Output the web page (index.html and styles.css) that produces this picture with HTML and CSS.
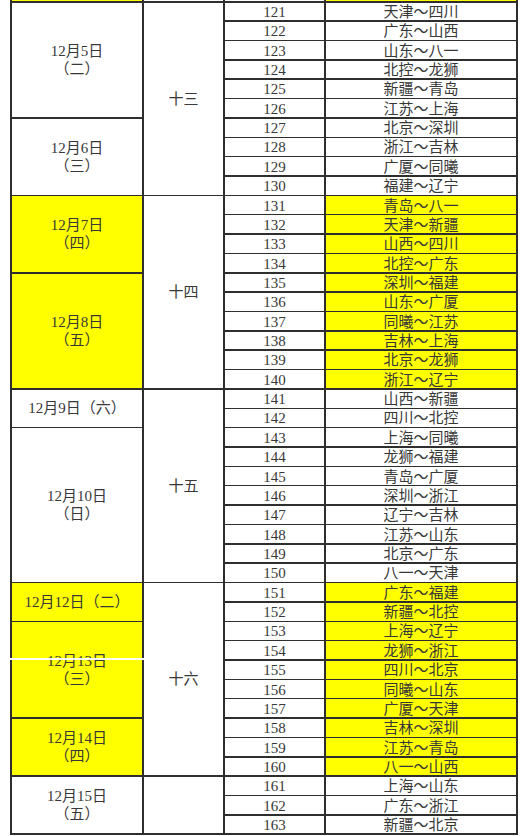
FILE: index.html
```html
<!DOCTYPE html>
<html lang="zh-CN">
<head>
<meta charset="utf-8">
<title>赛程</title>
<link rel="stylesheet" href="styles.css">
</head>
<body>
<div class="sheet">
  <div class="cell c1 y"></div><div class="cell c2"></div><div class="cell c3"></div><div class="cell c4 y"></div>

  <div class="cell c1 s6"><span>12月5日<br>（二）</span></div>
  <div class="cell c2 s10">十三</div>
  <div class="cell c3">121</div><div class="cell c4">天津～四川</div>
  <div class="cell c3">122</div><div class="cell c4">广东～山西</div>
  <div class="cell c3">123</div><div class="cell c4">山东～八一</div>
  <div class="cell c3">124</div><div class="cell c4">北控～龙狮</div>
  <div class="cell c3">125</div><div class="cell c4">新疆～青岛</div>
  <div class="cell c3">126</div><div class="cell c4">江苏～上海</div>
  <div class="cell c1 s4"><span>12月6日<br>（三）</span></div>
  <div class="cell c3">127</div><div class="cell c4">北京～深圳</div>
  <div class="cell c3">128</div><div class="cell c4">浙江～吉林</div>
  <div class="cell c3">129</div><div class="cell c4">广厦～同曦</div>
  <div class="cell c3">130</div><div class="cell c4">福建～辽宁</div>

  <div class="cell c1 s4 y"><span>12月7日<br>（四）</span></div>
  <div class="cell c2 s10">十四</div>
  <div class="cell c3">131</div><div class="cell c4 y">青岛～八一</div>
  <div class="cell c3">132</div><div class="cell c4 y">天津～新疆</div>
  <div class="cell c3">133</div><div class="cell c4 y">山西～四川</div>
  <div class="cell c3">134</div><div class="cell c4 y">北控～广东</div>
  <div class="cell c1 s6 y"><span>12月8日<br>（五）</span></div>
  <div class="cell c3">135</div><div class="cell c4 y">深圳～福建</div>
  <div class="cell c3">136</div><div class="cell c4 y">山东～广厦</div>
  <div class="cell c3">137</div><div class="cell c4 y">同曦～江苏</div>
  <div class="cell c3">138</div><div class="cell c4 y">吉林～上海</div>
  <div class="cell c3">139</div><div class="cell c4 y">北京～龙狮</div>
  <div class="cell c3">140</div><div class="cell c4 y">浙江～辽宁</div>

  <div class="cell c1 s2"><span>12月9日（六）</span></div>
  <div class="cell c2 s10">十五</div>
  <div class="cell c3">141</div><div class="cell c4">山西～新疆</div>
  <div class="cell c3">142</div><div class="cell c4">四川～北控</div>
  <div class="cell c1 s8"><span>12月10日<br>（日）</span></div>
  <div class="cell c3">143</div><div class="cell c4">上海～同曦</div>
  <div class="cell c3">144</div><div class="cell c4">龙狮～福建</div>
  <div class="cell c3">145</div><div class="cell c4">青岛～广厦</div>
  <div class="cell c3">146</div><div class="cell c4">深圳～浙江</div>
  <div class="cell c3">147</div><div class="cell c4">辽宁～吉林</div>
  <div class="cell c3">148</div><div class="cell c4">江苏～山东</div>
  <div class="cell c3">149</div><div class="cell c4">北京～广东</div>
  <div class="cell c3">150</div><div class="cell c4">八一～天津</div>

  <div class="cell c1 s2 y"><span>12月12日（二）</span></div>
  <div class="cell c2 s10">十六</div>
  <div class="cell c3">151</div><div class="cell c4 y">广东～福建</div>
  <div class="cell c3">152</div><div class="cell c4 y">新疆～北控</div>
  <div class="cell c1 s5 y"><span>12月13日<br>（三）</span></div>
  <div class="cell c3">153</div><div class="cell c4 y">上海～辽宁</div>
  <div class="cell c3">154</div><div class="cell c4 y">龙狮～浙江</div>
  <div class="cell c3">155</div><div class="cell c4 y">四川～北京</div>
  <div class="cell c3">156</div><div class="cell c4 y">同曦～山东</div>
  <div class="cell c3">157</div><div class="cell c4 y">广厦～天津</div>
  <div class="cell c1 s3 y"><span>12月14日<br>（四）</span></div>
  <div class="cell c3">158</div><div class="cell c4 y">吉林～深圳</div>
  <div class="cell c3">159</div><div class="cell c4 y">江苏～青岛</div>
  <div class="cell c3">160</div><div class="cell c4 y">八一～山西</div>

  <div class="cell c1 s3"><span>12月15日<br>（五）</span></div>
  <div class="cell c2 s3"></div>
  <div class="cell c3">161</div><div class="cell c4">上海～山东</div>
  <div class="cell c3">162</div><div class="cell c4">广东～浙江</div>
  <div class="cell c3">163</div><div class="cell c4">新疆～北京</div>

  <div class="scanline"></div>
</div>
</body>
</html>
```

FILE: styles.css
```css
html, body {
  margin: 0;
  padding: 0;
  background: #ffffff;
}

body {
  font-family: "Liberation Serif", "Noto Sans CJK SC", serif;
  font-size: 15px;
  color: #383838;
}

.sheet {
  position: relative;
  display: grid;
  grid-template-columns: 130px 79px 99px 190px;
  grid-template-rows: 1px repeat(43, 17.87px);
  gap: 1.5px 2px;
  padding: 0 2px 2px 2px;
  margin-left: 10px;
  width: max-content;
  background: #2e2e2e;
}

.cell {
  display: flex;
  align-items: center;
  justify-content: center;
  text-align: center;
  background: #ffffff;
  line-height: 18px;
  overflow: hidden;
  white-space: nowrap;
}

.cell.y {
  background: #ffff00;
}

.c1 { grid-column: 1; }
.c2 { grid-column: 2; }
.c3 { grid-column: 3; padding-top: 1px; }
.c4 { grid-column: 4; padding-top: 1px; }

.s2 { grid-row: span 2; }
.s3 { grid-row: span 3; }
.s4 { grid-row: span 4; }
.s5 { grid-row: span 5; }
.s6 { grid-row: span 6; }
.s8 { grid-row: span 8; }
.s10 { grid-row: span 10; }

.scanline {
  position: absolute;
  left: -10px;
  top: 658px;
  width: 153px;
  height: 1.5px;
  background: #ffffff;
}
```
